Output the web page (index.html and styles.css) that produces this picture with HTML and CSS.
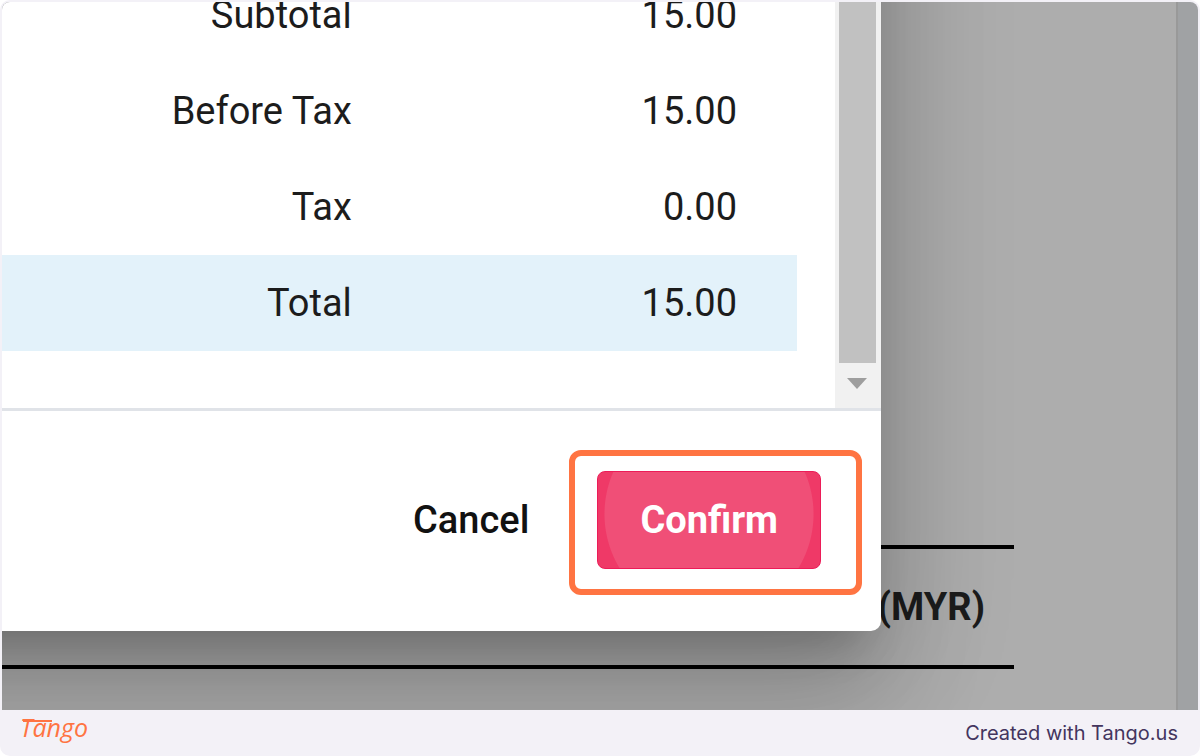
FILE: index.html
```html
<!DOCTYPE html>
<html lang="en">
<head>
  <meta charset="UTF-8">
  <meta name="viewport" content="width=device-width, initial-scale=1">
  <title>Confirm total</title>
  <link rel="stylesheet" href="styles.css">
</head>
<body>

  <div class="frame">
    <main class="shot">

      <!-- Dimmed page behind the dialog -->
      <div class="page">
        <table class="order-table">
          <thead>
            <tr><th scope="col">(MYR)</th></tr>
          </thead>
        </table>
      </div>

      <!-- Dialog -->
      <div class="dialog" role="dialog" aria-label="Confirm total">
        <div class="dialog-body">
          <div class="dialog-content">
            <table class="totals">
              <tr><th scope="row">Subtotal</th><td>15.00</td></tr>
              <tr><th scope="row">Before Tax</th><td>15.00</td></tr>
              <tr><th scope="row">Tax</th><td>0.00</td></tr>
              <tr class="grand-total"><th scope="row">Total</th><td>15.00</td></tr>
            </table>
          </div>
          <div class="scrollbar">
            <div class="thumb"></div>
            <svg class="arrow" viewBox="0 0 20 11" aria-hidden="true"><path d="M0 0h20L10 11z"/></svg>
          </div>
        </div>
        <div class="dialog-actions">
          <button type="button" class="btn-cancel">Cancel</button>
          <div class="highlight">
            <button type="button" class="btn-confirm">Confirm</button>
          </div>
        </div>
      </div>

    </main>

    <footer class="footer">
      <a class="logo" href="#">Tango</a>
      <span class="credit">Created with Tango.us</span>
    </footer>
  </div>

</body>
</html>
```
FILE: styles.css
```css
* {
  box-sizing: border-box;
}

body {
  margin: 0;
  background: #fff;
  font-family: Roboto, sans-serif;
  color: #1c1c1c;
}

.frame {
  display: flex;
  flex-direction: column;
  min-height: 100vh;
  padding: 2px 2px 0;
  border-radius: 10px;
  background: #f3f1f7;
  overflow: hidden;
}

/* page and dialog share one grid cell */
.shot {
  display: grid;
  flex: 1;
  border-radius: 8px 8px 0 0;
  background: #a0a2a4;
  overflow: hidden;
}

.page,
.dialog {
  grid-area: 1 / 1;
}

.page {
  margin-right: 20px;
  padding: 543px 162px 0 0;
  border-right: 2px solid #999;
  background: #adadad;
}

.order-table {
  width: 100%;
  border-collapse: collapse;
}

.order-table th {
  height: 120px;
  padding: 0 29px 0 0;
  border-top: 4px solid #000;
  border-bottom: 4px solid #000;
  font-size: 38px;
  font-weight: 700;
  text-align: right;
}

/* runs past the top and left edges of the view */
.dialog {
  position: relative;
  align-self: start;
  margin: -235px 317px 0 -200px;
  padding-top: 200px;
  border-radius: 10px;
  background: #fff;
  box-shadow:
    0 30px 41px -19px rgba(0, 0, 0, 0.2),
    0 66px 104px 8px rgba(0, 0, 0, 0.14),
    0 25px 126px 22px rgba(0, 0, 0, 0.12);
}

.dialog-body {
  display: flex;
  padding-left: 200px;
  border-bottom: 3px solid #e0e3e8;
}

.dialog-content {
  flex: 1;
  padding: 0 38px 57px 0;
}

.totals {
  width: 100%;
  border-collapse: collapse;
  font-size: 38px;
}

.totals th,
.totals td {
  height: 96px;
  padding: 0;
  font-weight: 400;
  text-align: right;
}

.totals th {
  width: 44%;
}

.totals td {
  padding-right: 60px;
}

.grand-total {
  background: #e3f2fa;
}

.scrollbar {
  display: flex;
  flex-direction: column;
  align-items: center;
  width: 46px;
  padding: 0 2px 19px 0;
  background: #f1f1f1;
}

.thumb {
  flex: 1;
  width: 37px;
  margin-bottom: 15px;
  background: #c1c1c1;
}

.arrow {
  width: 20px;
  height: 11px;
  fill: #9e9e9e;
}

.dialog-actions {
  display: flex;
  align-items: center;
  justify-content: flex-end;
  gap: 68px;
  padding: 60px 60px 62px;
}

.btn-cancel,
.btn-confirm {
  padding: 0;
  border: 0;
  background: none;
  font-family: inherit;
  font-size: 38px;
  font-weight: 500;
  color: #111;
  cursor: pointer;
}

.btn-confirm {
  display: block;
  height: 98px;
  padding: 0 42px;
  border: 1px solid #ec1c58;
  border-radius: 8px;
  background: radial-gradient(circle at 50% 42px, #f04f77 104px, #ef3967 105px);
  font-weight: 700;
  color: #fff;
}

.highlight {
  position: relative;
}

.highlight::after {
  content: "";
  position: absolute;
  inset: -21px -41px -26px -28px;
  border: 6px solid #ff7442;
  border-radius: 12px;
  pointer-events: none;
}

.footer {
  display: flex;
  align-items: center;
  justify-content: space-between;
  height: 46px;
  padding: 0 20px 0 18px;
}

.logo {
  position: relative;
  padding-bottom: 12px;
  font-family: "Open Sans", sans-serif;
  font-size: 25px;
  font-style: italic;
  font-weight: 400;
  color: #ff7442;
  text-decoration: none;
}

/* long bar of the T */
.logo::before {
  content: "";
  position: absolute;
  top: 10px;
  left: 3px;
  width: 29px;
  height: 2px;
  background: #ff7442;
}

.credit {
  font-family: Inter, sans-serif;
  font-size: 20px;
  color: #44355e;
}
```
